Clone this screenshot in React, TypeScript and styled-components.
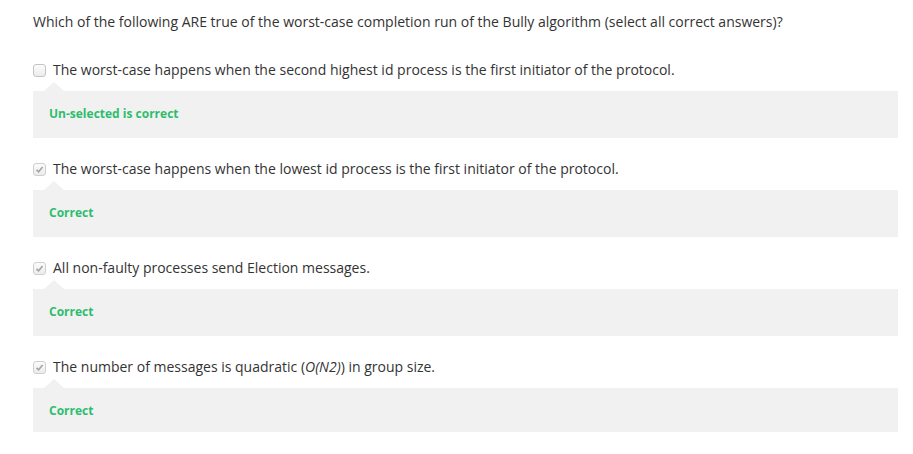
import React from 'react';
import styled, { createGlobalStyle } from 'styled-components';

const GlobalStyle = createGlobalStyle`
  html, body {
    margin: 0;
    padding: 0;
    background: #fff;
  }
  body {
    font-family: 'Open Sans', 'Liberation Sans', sans-serif;
    color: #333;
  }
`;

const Page = styled.div`
  padding: 12px 15px 0 33px;
`;

const Question = styled.p`
  margin: 0 0 28px;
  font-size: 14px;
  line-height: 20px;
`;

const Option = styled.div`
  margin-bottom: 21px;
`;

const OptionLabel = styled.label`
  display: flex;
  align-items: center;
  gap: 7px;
  font-size: 14px;
  line-height: 20px;
  height: 20px;
`;

const Box = styled.span<{ $checked: boolean }>`
  box-sizing: border-box;
  width: 13px;
  height: 13px;
  border: 1px solid ${(p) => (p.$checked ? '#cfcfcf' : '#c4c4c4')};
  border-radius: 3px;
  background: linear-gradient(#fbfbfb, #ececec);
  display: flex;
  align-items: center;
  justify-content: center;
  flex: none;
`;

const Feedback = styled.div<{ $short?: boolean }>`
  position: relative;
  margin-top: 11px;
  background: #f1f1f1;
  padding: 14px 16px 0;
  height: ${(p) => (p.$short ? 44 : 47)}px;
  box-sizing: border-box;
  width: 865px;

  &::before {
    content: '';
    position: absolute;
    top: -9px;
    left: 11px;
    border-left: 10px solid transparent;
    border-right: 10px solid transparent;
    border-bottom: 9px solid #f1f1f1;
  }
`;

const Verdict = styled.span`
  display: block;
  font-size: 12px;
  line-height: 17px;
  font-weight: 700;
  color: #2ebd6e;
`;

const Check = () => (
  <svg width="9" height="9" viewBox="0 0 9 9">
    <path d="M1.5 4.8 L3.6 6.8 L7.6 2" fill="none" stroke="#a3a3a3" strokeWidth="1.6" />
  </svg>
);

const options: { text: React.ReactNode; checked: boolean; verdict: string }[] = [
  {
    text: 'The worst-case happens when the second highest id process is the first initiator of the protocol.',
    checked: false,
    verdict: 'Un-selected is correct',
  },
  {
    text: 'The worst-case happens when the lowest id process is the first initiator of the protocol.',
    checked: true,
    verdict: 'Correct',
  },
  { text: 'All non-faulty processes send Election messages.', checked: true, verdict: 'Correct' },
  {
    text: (
      <>
        The number of messages is quadratic (<i>O(N2)</i>) in group size.
      </>
    ),
    checked: true,
    verdict: 'Correct',
  },
];

const App: React.FC = () => {
  return (
    <React.Fragment>
      <GlobalStyle />
      <Page>
        <Question>
          Which of the following ARE true of the worst-case completion run of the Bully algorithm (select all correct
          answers)?
        </Question>
        {options.map((o, i) => (
          <Option key={i}>
            <OptionLabel>
              <Box $checked={o.checked}>{o.checked && <Check />}</Box>
              <span>{o.text}</span>
            </OptionLabel>
            <Feedback $short={i === options.length - 1}>
              <Verdict>{o.verdict}</Verdict>
            </Feedback>
          </Option>
        ))}
      </Page>
    </React.Fragment>
  );
};

export default App;
